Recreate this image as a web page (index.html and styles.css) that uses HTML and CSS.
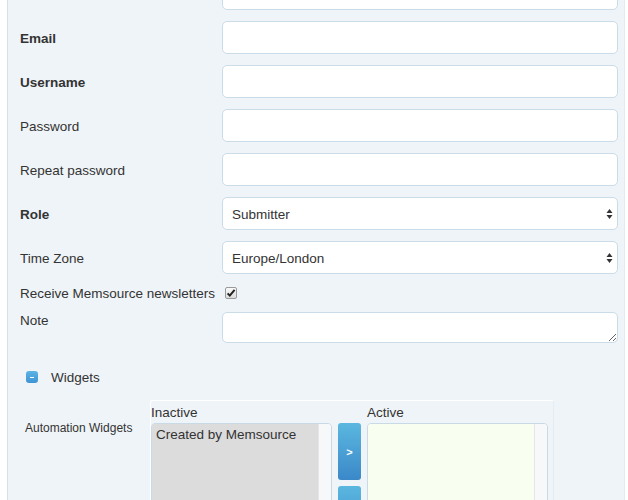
FILE: index.html
```html
<!DOCTYPE html>
<html>
<head>
<meta charset="utf-8">
<link rel="stylesheet" href="styles.css">
</head>
<body>
<div class="panel">
  <div class="form">
    <div class="row first"><span class="lbl"></span><input class="field" type="text"></div>
    <div class="row"><label class="lbl bold">Email</label><input class="field" type="text"></div>
    <div class="row"><label class="lbl bold">Username</label><input class="field" type="text"></div>
    <div class="row"><label class="lbl">Password</label><input class="field" type="password"></div>
    <div class="row"><label class="lbl">Repeat password</label><input class="field" type="password"></div>
    <div class="row"><label class="lbl bold">Role</label>
      <div class="selwrap"><div class="field sel">Submitter</div>
        <svg class="arrows" width="7" height="12" viewBox="0 0 7 12"><path d="M3.5 1 L6.5 5 H0.5 Z M3.5 11 L6.5 7 H0.5 Z" fill="#333"/></svg>
      </div>
    </div>
    <div class="row"><label class="lbl">Time Zone</label>
      <div class="selwrap"><div class="field sel">Europe/London</div>
        <svg class="arrows" width="7" height="12" viewBox="0 0 7 12"><path d="M3.5 1 L6.5 5 H0.5 Z M3.5 11 L6.5 7 H0.5 Z" fill="#333"/></svg>
      </div>
    </div>
    <div class="checkrow"><label class="lbl">Receive Memsource newsletters</label>
      <span class="check"><svg width="10" height="10" viewBox="0 0 10 10"><path d="M1.6 5.4 L3.8 7.6 L8.6 1.8" fill="none" stroke="#222" stroke-width="2"/></svg></span>
    </div>
    <div class="row note"><label class="lbl">Note</label><textarea class="field area"></textarea></div>
  </div>

  <div class="widgets-head">
    <span class="toggle"><span class="dash"></span></span>
    <span class="wtitle">Widgets</span>
  </div>

  <div class="widgets">
    <div class="wlabel">Automation Widgets</div>
    <div class="wbox">
      <div class="col">
        <div class="coltitle">Inactive</div>
        <div class="list inactive">
          <div class="items">Created by Memsource</div>
          <div class="scroll"></div>
        </div>
      </div>
      <div class="buttons">
        <div class="btn">&gt;</div>
        <div class="btn"></div>
      </div>
      <div class="col">
        <div class="coltitle">Active</div>
        <div class="list active">
          <div class="items"></div>
          <div class="scroll"></div>
        </div>
      </div>
    </div>
  </div>
</div>
</body>
</html>
```

FILE: styles.css
```css
* { box-sizing: border-box; }
html, body { margin: 0; padding: 0; background: #ffffff; }
body {
  font-family: "Liberation Sans", Arial, Helvetica, sans-serif;
  font-size: 13.5px;
  color: #333333;
  overflow: hidden;
  height: 500px;
}
.panel {
  display: flow-root;
  margin-left: 7px;
  width: 618px;
  height: 560px;
  background: #eff4f8;
  border-left: 1px solid #d5e1eb;
  border-right: 1px solid #e3ebf2;
  padding-left: 12px;
}
.form {
  display: flex;
  flex-direction: column;
  gap: 11px;
  margin-top: -23px;
}
.row {
  display: flex;
  align-items: center;
  height: 33px;
}
.lbl {
  width: 202px;
  flex: none;
  line-height: 17px;
  padding-top: 1px;
}
.bold { font-weight: bold; }
.field {
  width: 396px;
  height: 33px;
  border: 1px solid #cbdce9;
  border-radius: 5px;
  background: #ffffff;
  font: inherit;
  color: #333;
  padding: 0 10px;
  outline: none;
}
.selwrap { position: relative; }
.sel {
  display: flex;
  align-items: center;
  padding-left: 9px;
  padding-top: 1px;
}
.arrows {
  position: absolute;
  right: 5px;
  top: 11px;
}
.checkrow {
  display: flex;
  align-items: center;
  height: 18px;
  margin-top: -1px;
  margin-bottom: -1px;
}
.checkrow .lbl { width: auto; margin-right: 10px; padding-top: 0; }
.check {
  width: 12px;
  height: 12px;
  border: 1px solid #9a9a9a;
  border-radius: 2px;
  background: linear-gradient(#fafafa, #dcdcdc);
  display: flex;
  align-items: center;
  justify-content: center;
}
.note { align-items: flex-start; height: 31px; }
.note .lbl { padding-top: 0; }
.area {
  height: 31px;
  resize: vertical;
  padding: 4px 10px;
}
.widgets-head {
  display: flex;
  align-items: center;
  margin-top: 27px;
  margin-left: 6px;
  height: 14px;
}
.toggle {
  width: 12px;
  height: 12px;
  border-radius: 3px;
  background: linear-gradient(#5cb3e4, #3f94d4);
  display: flex;
  align-items: center;
  justify-content: center;
}
.dash { width: 4px; height: 1px; background: #ffffff; margin-top: 1px; }
.wtitle { margin-left: 13px; }
.widgets {
  display: flex;
  margin-top: 16px;
  margin-left: 5px;
}
.wlabel {
  font-size: 12px;
  width: 125px;
  flex: none;
  padding-top: 21px;
}
.wbox {
  width: 404px;
  height: 200px;
  border: 1px solid #ffffff;
  border-right-color: #e5edf4;
  border-radius: 3px 3px 0 0;
  display: flex;
  padding-right: 5px;
}
.col { display: flex; flex-direction: column; }
.coltitle { height: 22px; line-height: 23px; }
.list {
  width: 181px;
  height: 200px;
  display: flex;
  border: 1px solid #c9dae7;
  border-radius: 4px 4px 0 0;
  overflow: hidden;
}
.items { flex: 1; padding: 3px 4px; }
.inactive .items { background: #dcdcdc; }
.active .items { background: #f8fff0; }
.scroll {
  width: 13px;
  background: #f7f8f9;
  border-left: 1px solid #e6e6e6;
}
.buttons {
  display: flex;
  flex-direction: column;
  gap: 6px;
  padding-top: 22px;
  margin: 0 6px;
}
.btn {
  width: 23px;
  height: 57px;
  border-radius: 3px;
  background: linear-gradient(#5ab7df, #3b88c9);
  color: #ffffff;
  font-weight: bold;
  font-size: 11px;
  display: flex;
  align-items: center;
  justify-content: center;
}
```
